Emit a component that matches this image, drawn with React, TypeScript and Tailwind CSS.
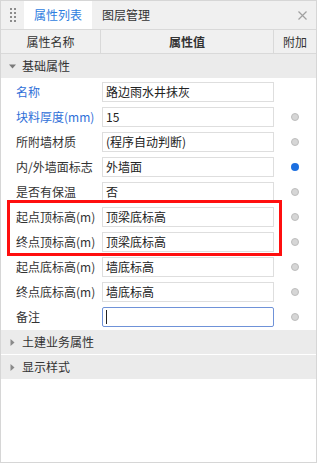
import React from "react";

type Row = { label: string; value: string; blue?: boolean; dot?: "none" | "gray" | "blue"; active?: boolean };

const rows: Row[] = [
  { label: "名称", value: "路边雨水井抹灰", blue: true, dot: "none" },
  { label: "块料厚度(mm)", value: "15", blue: true, dot: "gray" },
  { label: "所附墙材质", value: "(程序自动判断)", dot: "gray" },
  { label: "内/外墙面标志", value: "外墙面", dot: "blue" },
  { label: "是否有保温", value: "否", dot: "gray" },
  { label: "起点顶标高(m)", value: "顶梁底标高", dot: "gray" },
  { label: "终点顶标高(m)", value: "顶梁底标高", dot: "gray" },
  { label: "起点底标高(m)", value: "墙底标高", dot: "gray" },
  { label: "终点底标高(m)", value: "墙底标高", dot: "gray" },
  { label: "备注", value: "", dot: "gray", active: true },
];

function PropRow({ r }: { r: Row }) {
  return (
    <div className="flex h-[25px] items-center">
      <div className={`w-[101px] pl-[15px] text-[12px] leading-none whitespace-nowrap ${r.blue ? "text-[#2f6fd8]" : "text-[#333]"}`}>
        {r.label}
      </div>
      <div
        className={`relative flex h-[20px] w-[172px] items-center bg-white pl-[3px] text-[12px] leading-none text-[#222] ${
          r.active ? "rounded-[2px] border border-[#6f92d8]" : "border border-[#dedede]"
        }`}
      >
        {r.active ? <span className="block h-[14px] w-[1px] bg-[#222]" /> : r.value}
      </div>
      <div className="flex flex-1 items-center justify-center">
        {r.dot === "gray" && <span className="block h-[8px] w-[8px] rounded-full border border-[#bdbdbd] bg-[#d6d6d6]" />}
        {r.dot === "blue" && <span className="block h-[8px] w-[8px] rounded-full bg-[#1c6fe0]" />}
      </div>
    </div>
  );
}

function Group({ label, open }: { label: string; open?: boolean }) {
  return (
    <div className="flex h-[25px] items-center border-b border-white bg-[#ebebeb] text-[12px] text-[#333]">
      <div className="flex w-[20px] justify-center pl-[3px]">
        {open ? (
          <svg width="7" height="5" viewBox="0 0 7 5">
            <path d="M0 0.5 L7 0.5 L3.5 4.5 Z" fill="#7a7a7a" />
          </svg>
        ) : (
          <svg width="5" height="7" viewBox="0 0 5 7">
            <path d="M0.5 0 L4.5 3.5 L0.5 7 Z" fill="#8a8a8a" />
          </svg>
        )}
      </div>
      <span className="pl-[1px] leading-none">{label}</span>
    </div>
  );
}

export default function App() {
  return (
    <div
      className="flex h-[463px] w-[317px] flex-col border border-[#d6d6d6] bg-white"
      style={{ fontFamily: '"Noto Sans CJK SC", "Noto Sans", sans-serif' }}
    >
      {/* Tab bar */}
      <div className="flex h-[29px] items-stretch border-b border-[#d9d9d9] bg-[#f0f0f0]">
        <div className="flex w-[23px] items-center justify-center">
          <div className="grid grid-cols-2 gap-x-[2px] gap-y-[2px]">
            {Array.from({ length: 8 }).map((_, i) => (
              <span key={i} className="block h-[2px] w-[2px] bg-[#8c8c8c]" />
            ))}
          </div>
        </div>
        <div className="flex w-[68px] items-center justify-center bg-white text-[12px] leading-none text-[#2e7de0]">
          属性列表
        </div>
        <div className="flex w-[68px] items-center justify-center text-[12px] leading-none text-[#333]">图层管理</div>
        <div className="flex-1" />
        <div className="flex w-[28px] items-center justify-center">
          <svg width="9" height="9" viewBox="0 0 9 9">
            <path d="M0.5 0.5 L8.5 8.5 M8.5 0.5 L0.5 8.5" stroke="#a0a0a0" strokeWidth="1.2" />
          </svg>
        </div>
      </div>

      {/* Column header */}
      <div className="flex h-[24px] border-b border-[#d9d9d9] bg-[#f0f0f0] text-[12px] leading-none text-[#333]">
        <div className="flex w-[100px] items-center justify-center border-r border-[#d9d9d9]">属性名称</div>
        <div className="flex w-[173px] items-center justify-center border-r border-[#d9d9d9] font-bold">属性值</div>
        <div className="flex flex-1 items-center justify-center">附加</div>
      </div>

      <Group label="基础属性" open />

      <div className="relative">
        {rows.map((r) => (
          <PropRow key={r.label} r={r} />
        ))}
        <div className="pointer-events-none absolute left-[6px] top-[121px] h-[56px] w-[275px] border-[3px] border-[#ff0f0f]" />
      </div>

      <div className="h-[1px]" />
      <Group label="土建业务属性" />
      <Group label="显示样式" />
    </div>
  );
}
